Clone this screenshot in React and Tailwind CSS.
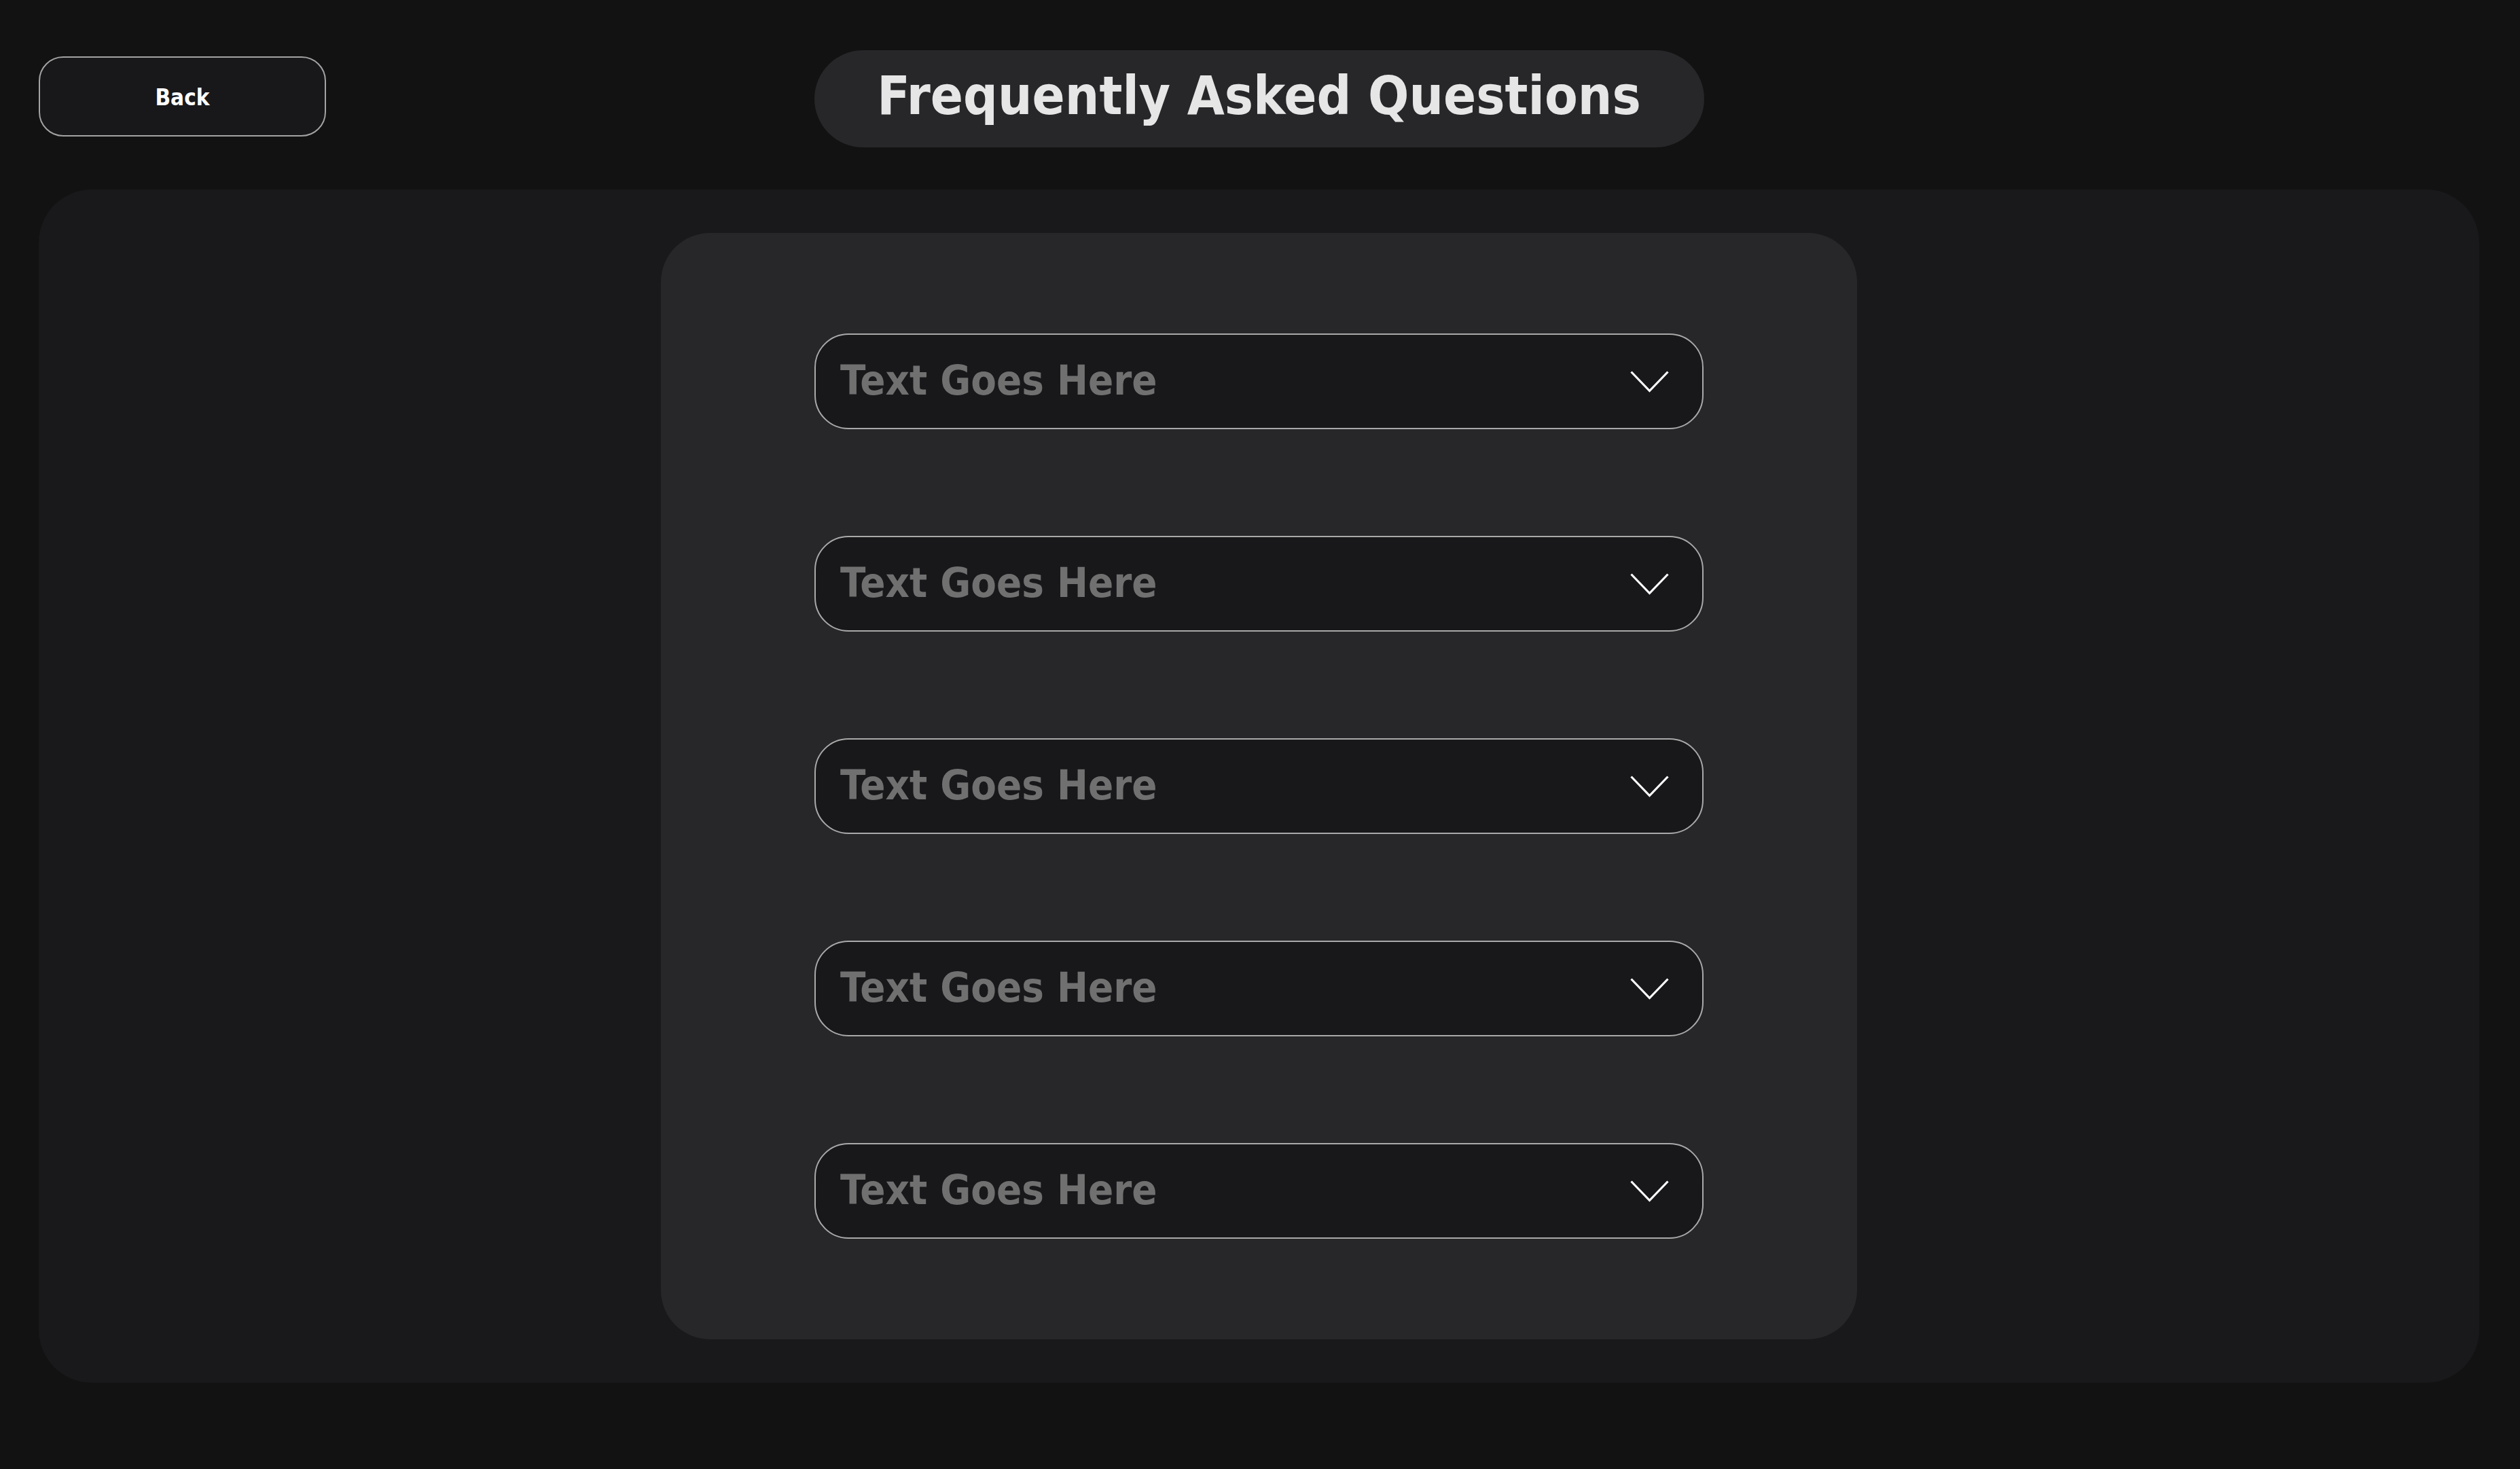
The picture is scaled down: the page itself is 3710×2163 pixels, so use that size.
import React from 'react';

const FONT = "font-['DejaVu_Sans_Condensed','DejaVu_Sans',sans-serif]";

const Chevron = () => (
    <svg width="57" height="32" viewBox="0 0 57 32" fill="none" className="shrink-0">
        <polyline points="1.5,1.5 28.5,29.5 55.5,1.5" stroke="#ffffff" strokeWidth="3.2" />
    </svg>
);

const FaqItem = ({ label }) => (
    <button className="flex items-center justify-between w-[1309px] h-[141px] rounded-[50px] border-2 border-[#a9a9a9] bg-[#18181b] pl-[36px] pr-[49px]">
        <span className="mb-[5px] text-[61px] font-bold leading-none text-[#707070]">{label}</span>
        <Chevron />
    </button>
);

const App = () => {
    const items = ['Text Goes Here', 'Text Goes Here', 'Text Goes Here', 'Text Goes Here', 'Text Goes Here'];

    return (
        <div className={`min-h-screen w-full bg-[#121212] pl-[57px] pr-[60px] ${FONT}`}>
            <header className="grid grid-cols-[1fr_auto_1fr] items-start pt-[74px]">
                <div>
                    <button className="mt-[9px] w-[423px] h-[118px] rounded-[36px] border-2 border-[#a3a3a3] bg-[#18181b] pt-[4px] text-[33px] font-bold text-white">
                        Back
                    </button>
                </div>
                <h1 className="flex items-center justify-center w-[1310px] h-[143px] rounded-full bg-[#27272a] pb-[9px] text-[79px] font-bold leading-none text-[#e6e6e6]">
                    Frequently Asked Questions
                </h1>
                <div />
            </header>

            <main className="mt-[62px] rounded-[78px] bg-[#19191c] py-[64px]">
                <div className="mx-auto flex w-[1761px] flex-col items-center gap-[157px] rounded-[72px] bg-[#27272a] py-[148px]">
                    {items.map((label, i) => (
                        <FaqItem key={i} label={label} />
                    ))}
                </div>
            </main>
        </div>
    );
};

export default App;
